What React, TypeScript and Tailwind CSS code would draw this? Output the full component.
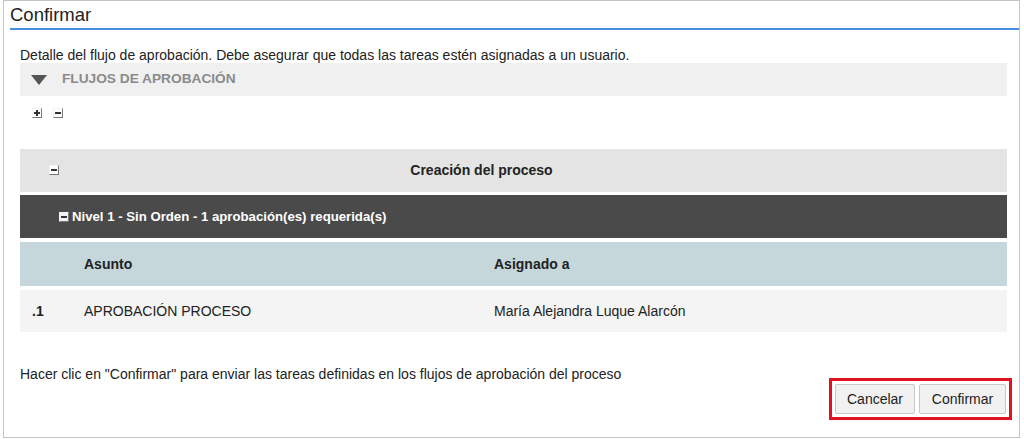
import React from "react";

function TreeBox({ sign, dark = false }: { sign: "+" | "-"; dark?: boolean }) {
  return (
    <span
      className={
        "relative inline-block w-[10px] h-[10px] border border-t-[#f4f4f4] border-l-[#f4f4f4] border-r-[#777] border-b-[#777] " +
        (dark ? "bg-[#f2f2f2]" : "bg-white")
      }
    >
      <span className="absolute left-[1px] top-[3px] w-[6px] h-[2px] bg-[#333]" />
      {sign === "+" && <span className="absolute left-[3px] top-[1px] w-[2px] h-[6px] bg-[#333]" />}
    </span>
  );
}

export default function App() {
  return (
    <div className="w-[1024px] h-[439px] bg-white font-['Liberation_Sans',Arial,sans-serif] text-[#222]">
      <div className="ml-[3px] w-[1017px] h-[438px] border border-[#c4c4c4] flex flex-col">
        {/* title */}
        <div className="ml-[6px] h-[29px] border-b-2 border-[#4a90e2] flex items-end pb-[3px]">
          <span className="text-[18.5px] leading-[20px] text-[#222]">Confirmar</span>
        </div>

        <div className="pl-[16px] pr-[12px] flex flex-col">
          <p className="mt-[18px] text-[14px] leading-[15px]">
            Detalle del flujo de aprobación. Debe asegurar que todas las tareas estén asignadas a un usuario.
          </p>

          {/* flujos bar */}
          <div className="h-[33px] bg-[#f0f0f0] flex items-center pl-[11px]">
            <svg width="16" height="10" viewBox="0 0 16 10" className="mr-[15px]">
              <polygon points="0,0 16,0 8,10" fill="#555" />
            </svg>
            <span className="text-[13.7px] font-bold text-[#8a8a8a]">FLUJOS DE APROBACIÓN</span>
          </div>

          <div className="h-[20px] mt-[12px] flex items-start gap-[11px] pl-[12px]">
            <TreeBox sign="+" />
            <TreeBox sign="-" />
          </div>

          {/* creación */}
          <div className="mt-[21px] h-[43px] bg-[#e4e4e4] flex items-center relative">
            <span className="absolute left-[29px] top-[16px] flex">
              <TreeBox sign="-" />
            </span>
            <span className="flex-1 text-center text-[14px] font-bold text-[#222] pr-[64px]">Creación del proceso</span>
          </div>

          {/* nivel */}
          <div className="mt-[3px] h-[43px] bg-[#4a4a4a] flex items-center pl-[39px] gap-[3px]">
            <TreeBox sign="-" dark />
            <span className="text-[13.2px] font-bold text-white">Nivel 1 - Sin Orden - 1 aprobación(es) requerida(s)</span>
          </div>

          {/* header */}
          <div className="mt-[4px] h-[44px] bg-[#c5d7db] grid grid-cols-[64px_410px_1fr] items-center text-[14px] font-bold">
            <span />
            <span>Asunto</span>
            <span>Asignado a</span>
          </div>

          {/* row */}
          <div className="mt-[4px] h-[42px] bg-[#f4f4f4] grid grid-cols-[64px_410px_1fr] items-center text-[14px]">
            <span className="pl-[12px] font-bold">.1</span>
            <span>APROBACIÓN PROCESO</span>
            <span>María Alejandra Luque Alarcón</span>
          </div>

          <p className="mt-[35px] text-[14px] leading-[15px]">
            Hacer clic en "Confirmar" para enviar las tareas definidas en los flujos de aprobación del proceso
          </p>

          <div className="flex justify-end mt-[-4px] mr-[-5px]">
            <div className="border-[3px] border-[#e3101f] p-[3px] flex gap-[4px]">
              <button className="w-[80px] h-[30px] bg-[#f1f1f1] border border-[#c8c8c8] rounded-[2px] text-[14px] text-[#222]">
                Cancelar
              </button>
              <button className="w-[87px] h-[30px] bg-[#f1f1f1] border border-[#c8c8c8] rounded-[2px] text-[14px] text-[#222]">
                Confirmar
              </button>
            </div>
          </div>
        </div>
      </div>
    </div>
  );
}
